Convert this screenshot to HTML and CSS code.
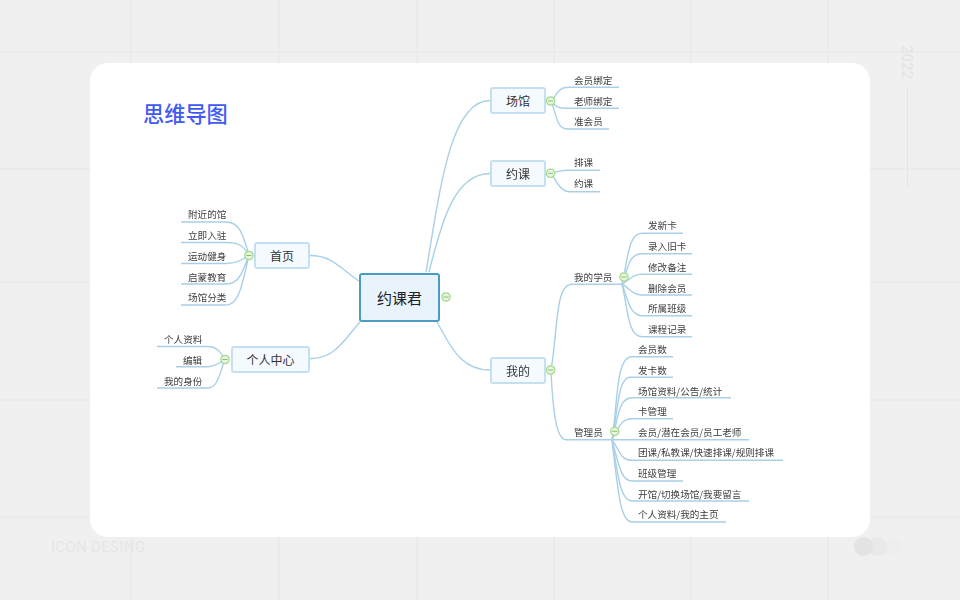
FILE: index.html
```html
<!DOCTYPE html>
<html lang="zh-CN">
<head>
<meta charset="utf-8">
<title>思维导图</title>
<link rel="stylesheet" href="styles.css">
</head>
<body>
<div class="page">
  <main class="card">
    <h1 class="title">思维导图</h1>
  </main>
  <aside class="year">
    <span class="year-text">2022</span>
    <span class="year-line"></span>
  </aside>
  <footer class="foot">
    <span class="brand">ICON DESING</span>
    <span class="dots"><i class="d1"></i><i class="d2"></i><i class="d3"></i></span>
  </footer>

  <div class="map">
    <svg class="links" width="960" height="600" viewBox="0 0 960 600">
      <defs>
        <g id="fold">
          <circle r="4.2" class="fold-ring"/>
          <path d="M-2.6 0H2.6" class="fold-dash"/>
        </g>
      </defs>
      <g class="stroke">
        <path d="M359 281C340 268 332 255.5 310 255.5"/>
        <path d="M360 322C343 341 335 358.7 310 358.7"/>
        <path d="M426 272C440 190 450 100.5 490 100.5"/>
        <path d="M429 272C440 230 452 173.5 490 173.5"/>
        <path d="M437 322C450 345 460 370 490 370"/>

        <path d="M249 255C243 235 240 222 226 222H181"/>
        <path d="M249 255C243 245 238 242.5 226 242.5H181"/>
        <path d="M249 255C243 260 236 263.5 226 263.5H181"/>
        <path d="M249 255C243 270 240 284 226 284H181"/>
        <path d="M249 255C243 280 240 305 226 305H181"/>

        <path d="M225 359C220 352 217 346.5 208 346.5H157"/>
        <path d="M225 359C220 363 215 366.7 208 366.7H176"/>
        <path d="M225 359C220 372 218 388 208 388H157"/>

        <path d="M551 101C558 95 556 87.3 570 87.3H619"/>
        <path d="M551 101C555 106 558 108.3 566 108.3H619"/>
        <path d="M551 101C557 115 556 129 568 129H609"/>

        <path d="M551 173C556 172 560 170.3 568 170.3H600"/>
        <path d="M551 173C556 180 560 191.7 570 191.7H600"/>

        <path d="M551 370C558 330 555 284.3 572 284.3H622"/>
        <path d="M551 372C553 410 556 439.7 566 439.7H612"/>

        <path d="M622 284C628 260 628 233.3 642 233.3H683"/>
        <path d="M622 284C628 270 628 253.7 642 253.7H692"/>
        <path d="M622 284C630 280 632 274.3 642 274.3H692"/>
        <path d="M622 284C630 288 632 295 642 295H692"/>
        <path d="M622 284C628 300 630 315.7 642 315.7H692"/>
        <path d="M622 284C628 310 628 336.7 642 336.7H692"/>

        <path d="M612 440C618 400 616 356.7 632 356.7H673"/>
        <path d="M612 440C618 410 618 377.3 630 377.3H673"/>
        <path d="M612 440C618 420 618 397.7 632 397.7H731"/>
        <path d="M612 440C618 430 620 418.7 632 418.7H673"/>
        <path d="M612 439.7H749"/>
        <path d="M612 440C620 450 620 460.3 632 460.3H783"/>
        <path d="M612 440C618 460 620 481 632 481H683"/>
        <path d="M612 440C618 475 620 501 632 501H749"/>
        <path d="M612 440C618 490 620 522 632 522H726"/>
      </g>
      <use href="#fold" x="446" y="297"/>
      <use href="#fold" x="249" y="255.5"/>
      <use href="#fold" x="225" y="359.5"/>
      <use href="#fold" x="550.5" y="101"/>
      <use href="#fold" x="550.5" y="173.3"/>
      <use href="#fold" x="550.7" y="370"/>
      <use href="#fold" x="624" y="277"/>
      <use href="#fold" x="614.7" y="431.3"/>
    </svg>

    <div class="node root" style="left:359px;top:273px;width:81px;height:49px">约课君</div>
    <div class="node topic" style="left:254px;top:242px;width:56px;height:27px">首页</div>
    <div class="node topic" style="left:231px;top:346px;width:79px;height:27px">个人中心</div>
    <div class="node topic" style="left:490px;top:87px;width:56px;height:27px">场馆</div>
    <div class="node topic" style="left:490px;top:160px;width:56px;height:27px">约课</div>
    <div class="node topic" style="left:490px;top:357px;width:56px;height:27px">我的</div>

    <span class="leaf" style="left:188px;top:207px">附近的馆</span>
    <span class="leaf" style="left:188px;top:228px">立即入驻</span>
    <span class="leaf" style="left:188px;top:249px">运动健身</span>
    <span class="leaf" style="left:188px;top:270px">启蒙教育</span>
    <span class="leaf" style="left:188px;top:290px">场馆分类</span>

    <span class="leaf" style="left:164px;top:332px">个人资料</span>
    <span class="leaf" style="left:183px;top:353px">编辑</span>
    <span class="leaf" style="left:164px;top:374px">我的身份</span>

    <span class="leaf" style="left:574px;top:73px">会员绑定</span>
    <span class="leaf" style="left:574px;top:94px">老师绑定</span>
    <span class="leaf" style="left:574px;top:114px">准会员</span>
    <span class="leaf" style="left:574px;top:155px">排课</span>
    <span class="leaf" style="left:574px;top:176px">约课</span>

    <span class="leaf" style="left:574px;top:270px">我的学员</span>
    <span class="leaf" style="left:574px;top:425px">管理员</span>

    <span class="leaf" style="left:648px;top:218px">发新卡</span>
    <span class="leaf" style="left:648px;top:239px">录入旧卡</span>
    <span class="leaf" style="left:648px;top:260px">修改备注</span>
    <span class="leaf" style="left:648px;top:281px">删除会员</span>
    <span class="leaf" style="left:648px;top:301px">所属班级</span>
    <span class="leaf" style="left:648px;top:322px">课程记录</span>

    <span class="leaf" style="left:638px;top:342px">会员数</span>
    <span class="leaf" style="left:638px;top:363px">发卡数</span>
    <span class="leaf" style="left:638px;top:384px">场馆资料/公告/统计</span>
    <span class="leaf" style="left:638px;top:404px">卡管理</span>
    <span class="leaf" style="left:638px;top:425px">会员/潜在会员/员工老师</span>
    <span class="leaf" style="left:638px;top:445px">团课/私教课/快速排课/规则排课</span>
    <span class="leaf" style="left:638px;top:466px">班级管理</span>
    <span class="leaf" style="left:638px;top:487px">开馆/切换场馆/我要留言</span>
    <span class="leaf" style="left:638px;top:507px">个人资料/我的主页</span>
  </div>
</div>
</body>
</html>
```

FILE: styles.css
```css
* { box-sizing: border-box; }

html, body { margin: 0; padding: 0; }

body {
  font-family: "Noto Sans CJK SC", "Noto Sans", sans-serif;
}

.page {
  position: relative;
  width: 960px;
  height: 600px;
  overflow: hidden;
  display: grid;
  grid-template-columns: 90px 780px 90px;
  grid-template-rows: 63px 474px 63px;
  background-color: #f0f0f0;
  background-image:
    linear-gradient(#ebebeb, #ebebeb),
    linear-gradient(#ebebeb, #ebebeb),
    linear-gradient(#ebebeb, #ebebeb),
    linear-gradient(#ebebeb, #ebebeb),
    linear-gradient(#ebebeb, #ebebeb),
    linear-gradient(#ebebeb, #ebebeb),
    linear-gradient(#ebebeb, #ebebeb),
    linear-gradient(#ebebeb, #ebebeb),
    linear-gradient(#ebebeb, #ebebeb),
    linear-gradient(#ebebeb, #ebebeb),
    linear-gradient(#ebebeb, #ebebeb);
  background-repeat: no-repeat;
  background-size:
    2px 100%, 2px 100%, 2px 100%, 2px 100%, 2px 100%, 2px 100%,
    100% 2px, 100% 2px, 100% 2px, 100% 2px, 100% 2px;
  background-position:
    130px 0, 278px 0, 416px 0, 553px 0, 690px 0, 827px 0,
    0 51px, 0 168px, 0 281px, 0 399px, 0 516px;
}

.card {
  grid-column: 2;
  grid-row: 2;
  background: #fff;
  border-radius: 18px;
  padding: 34px 0 0 53px;
}

.title {
  margin: 0;
  font-size: 21.2px;
  line-height: 32px;
  font-weight: 500;
  color: #3f5af5;
}

.year {
  grid-column: 3;
  grid-row: 1 / 3;
  display: flex;
  flex-direction: column;
  align-items: center;
  padding: 45px 16px 0 0;
  gap: 9px;
}

.year-text {
  writing-mode: vertical-rl;
  font-family: "Roboto", sans-serif;
  font-size: 15px;
  line-height: 16px;
  font-weight: 500;
  color: #e5e5e5;
  height: 33px;
}

.year-line {
  width: 1px;
  height: 100px;
  background: #e4e4e4;
}

.foot {
  grid-column: 1 / 4;
  grid-row: 3;
  display: flex;
  justify-content: space-between;
  align-items: flex-start;
  padding: 0 57px 0 51px;
}

.brand {
  margin-top: 1px;
  font-family: "Roboto", sans-serif;
  font-size: 15px;
  line-height: 18px;
  font-weight: 400;
  letter-spacing: 0.3px;
  color: #e6e6e6;
}

.dots {
  display: flex;
}

.dots i {
  display: block;
  width: 19px;
  height: 19px;
  border-radius: 50%;
}

.dots .d1 { background: #e3e3e3; position: relative; z-index: 2; }
.dots .d2 { background: #e9e9e9; margin-left: -5px; position: relative; z-index: 1; }
.dots .d3 { background: #eeeeee; margin-left: -3px; }

.map {
  position: absolute;
  left: 0;
  top: 0;
  width: 960px;
  height: 600px;
  filter: blur(0.3px);
}

.links {
  position: absolute;
  left: 0;
  top: 0;
  display: block;
}

.stroke path {
  fill: none;
  stroke: #a9d0e7;
  stroke-width: 1.4;
}

.fold-ring {
  fill: #e9f5e2;
  stroke: #a4da8b;
  stroke-width: 1.2;
}

.fold-dash {
  fill: none;
  stroke: #8bbf72;
  stroke-width: 1;
}

.node {
  position: absolute;
  display: flex;
  align-items: center;
  justify-content: center;
  border-radius: 3px;
  color: #333;
  white-space: nowrap;
}

.root {
  background: #e8f3fc;
  border: 2px solid #4a9cc7;
  font-size: 15px;
  color: #222;
}

.topic {
  background: #f5faff;
  border: 2px solid #c4e0f2;
  font-size: 12px;
}

.leaf {
  position: absolute;
  font-size: 9.6px;
  line-height: 14px;
  height: 14px;
  color: #3d3d3d;
  white-space: nowrap;
}
```
